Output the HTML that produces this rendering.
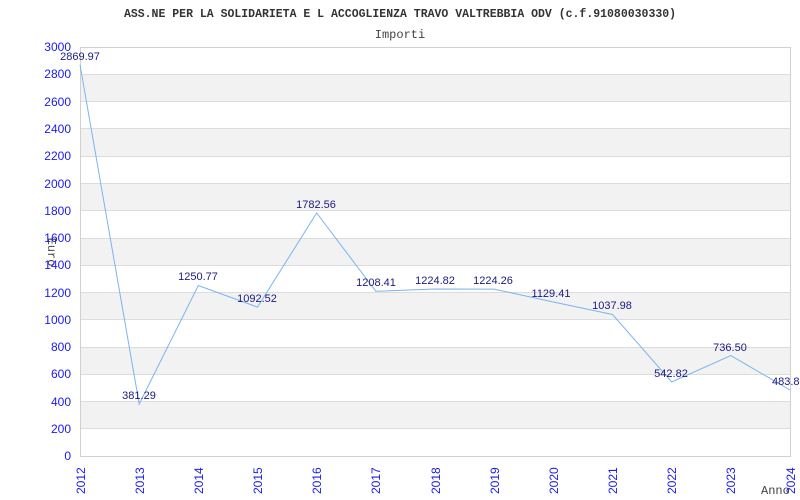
<!DOCTYPE html>
<html><head><meta charset="utf-8"><style>body{margin:0;background:#fff}svg{display:block}</style></head><body>
<svg width="800" height="500" xmlns="http://www.w3.org/2000/svg" font-family="Liberation Sans, sans-serif">
<rect width="800" height="500" fill="#fff"/>
<g fill="#f2f2f2">
<rect x="80" y="74.3" width="710" height="27.3"/>
<rect x="80" y="128.8" width="710" height="27.3"/>
<rect x="80" y="183.3" width="710" height="27.3"/>
<rect x="80" y="237.9" width="710" height="27.3"/>
<rect x="80" y="292.4" width="710" height="27.3"/>
<rect x="80" y="346.9" width="710" height="27.3"/>
<rect x="80" y="401.5" width="710" height="27.3"/>
</g>
<g stroke="#dcdcdc" stroke-width="1">
<line x1="80" x2="790" y1="74.5" y2="74.5"/><line x1="80" x2="790" y1="101.5" y2="101.5"/>
<line x1="80" x2="790" y1="128.5" y2="128.5"/><line x1="80" x2="790" y1="156.5" y2="156.5"/>
<line x1="80" x2="790" y1="183.5" y2="183.5"/><line x1="80" x2="790" y1="210.5" y2="210.5"/>
<line x1="80" x2="790" y1="238.5" y2="238.5"/><line x1="80" x2="790" y1="265.5" y2="265.5"/>
<line x1="80" x2="790" y1="292.5" y2="292.5"/><line x1="80" x2="790" y1="319.5" y2="319.5"/>
<line x1="80" x2="790" y1="347.5" y2="347.5"/><line x1="80" x2="790" y1="374.5" y2="374.5"/>
<line x1="80" x2="790" y1="401.5" y2="401.5"/><line x1="80" x2="790" y1="428.5" y2="428.5"/>
</g>
<rect x="80.5" y="47.5" width="710" height="409" fill="none" stroke="#d0d0d0"/>
<polyline fill="none" stroke="#7ab4f0" stroke-width="1" points="80,64.7 139.2,404 198.3,285.5 257.5,307.1 316.7,213 375.8,291.3 435,289 494.2,289.1 553.3,302 612.5,314.5 671.7,382 730.8,355.6 790,390"/>
<text x="400" y="17" font-family="Liberation Mono, monospace" font-weight="bold" fill="#333" font-size="11.5" text-anchor="middle">ASS.NE PER LA SOLIDARIETA E L ACCOGLIENZA TRAVO VALTREBBIA ODV (c.f.91080030330)</text>
<g font-family="Liberation Mono, monospace" fill="#444" font-size="12">
<text x="400" y="38" text-anchor="middle">Importi</text>
<text x="761" y="494">Anno</text>
<text transform="translate(48,252) rotate(90)" text-anchor="middle">Euro</text>
</g>
<g fill="#1a1aee" font-size="12" text-anchor="end">
<text x="71" y="51">3000</text><text x="71" y="78">2800</text><text x="71" y="106">2600</text>
<text x="71" y="133">2400</text><text x="71" y="160">2200</text><text x="71" y="188">2000</text>
<text x="71" y="215">1800</text><text x="71" y="242">1600</text><text x="71" y="269">1400</text>
<text x="71" y="297">1200</text><text x="71" y="324">1000</text><text x="71" y="351">800</text>
<text x="71" y="378">600</text><text x="71" y="406">400</text><text x="71" y="433">200</text>
<text x="71" y="460">0</text>
</g>
<g fill="#1a1aee" font-size="12">
<text transform="translate(85,494) rotate(-90)">2012</text>
<text transform="translate(144,494) rotate(-90)">2013</text>
<text transform="translate(203,494) rotate(-90)">2014</text>
<text transform="translate(262,494) rotate(-90)">2015</text>
<text transform="translate(321,494) rotate(-90)">2016</text>
<text transform="translate(380,494) rotate(-90)">2017</text>
<text transform="translate(440,494) rotate(-90)">2018</text>
<text transform="translate(499,494) rotate(-90)">2019</text>
<text transform="translate(558,494) rotate(-90)">2020</text>
<text transform="translate(617,494) rotate(-90)">2021</text>
<text transform="translate(676,494) rotate(-90)">2022</text>
<text transform="translate(735,494) rotate(-90)">2023</text>
<text transform="translate(795,494) rotate(-90)">2024</text>
</g>
<g fill="#1a1a80" font-size="11" text-anchor="middle">
<text x="80" y="60">2869.97</text>
<text x="139" y="399">381.29</text>
<text x="198" y="280">1250.77</text>
<text x="257" y="302">1092.52</text>
<text x="316" y="208">1782.56</text>
<text x="376" y="286">1208.41</text>
<text x="435" y="284">1224.82</text>
<text x="493" y="284">1224.26</text>
<text x="551" y="297">1129.41</text>
<text x="612" y="309">1037.98</text>
<text x="671" y="377">542.82</text>
<text x="730" y="351">736.50</text>
<text x="772" y="385" text-anchor="start">483.8</text>
</g>
</svg>
</body></html>
